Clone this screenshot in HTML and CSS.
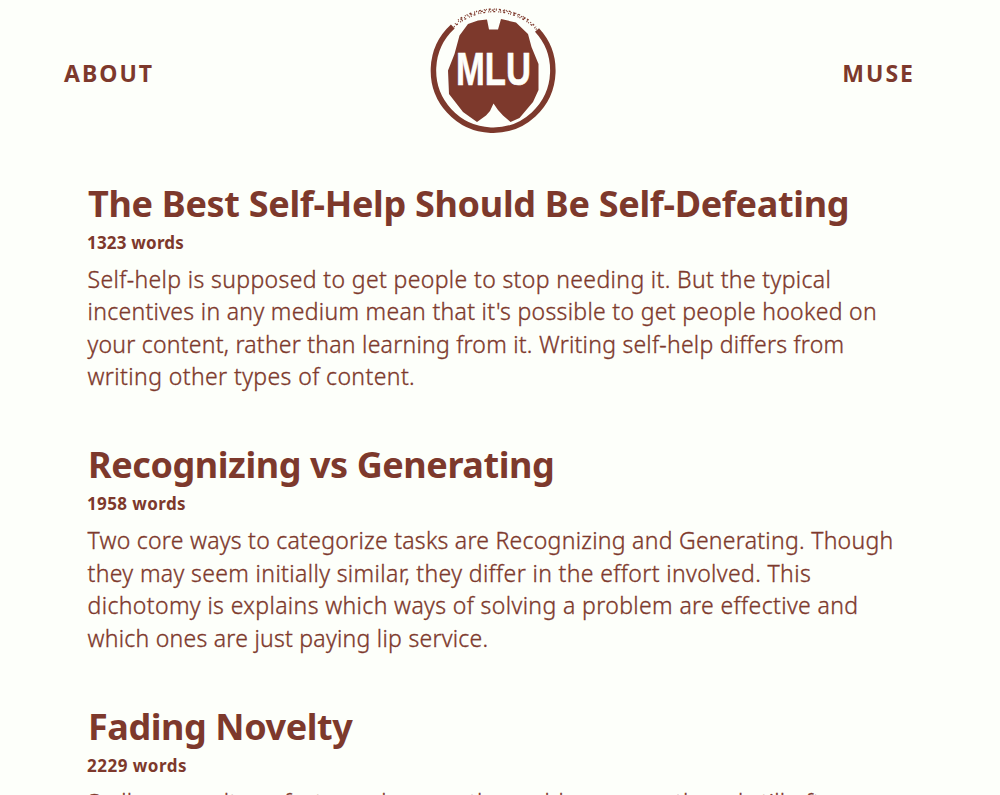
FILE: index.html
```html
<!DOCTYPE html>
<html lang="en">
<head>
<meta charset="utf-8">
<title>MLU</title>
<link rel="stylesheet" href="styles.css">
</head>
<body>
<header class="top">
  <a class="nav">ABOUT</a>
  <svg class="logo" viewBox="0 0 126 126">
    <path class="ring" d="M22.800 19.500A59.700 59.700 0 1 0 107 23"/>
    <path class="dots" d="M24 20A59.700 59.700 0 0 1 107 23"/>
    <path class="dots inner" d="M25 17A61 61 0 0 1 106 20"/>
    <path class="dots" d="M28 13A62.500 62.500 0 0 1 100 14"/>
    <path class="brain" d="M48 13.500L57 12.500L59 22.500H68L71 12L86 15.500L98 27L101.500 40L108.500 57V83L103 95L89.500 111L80.500 115L73 108.500L68 103L63.500 96.500L60 104L56 108.500L47 115L33 105L19 87L18 63.500L24.500 47L29.500 28.500L38 17Z"/>
    <text class="mark" x="26" y="78" textLength="75" lengthAdjust="spacingAndGlyphs">MLU</text>
  </svg>
  <a class="nav right">MUSE</a>
</header>
<main class="posts">
  <article class="post">
    <h2 class="title t1">The Best Self-Help Should Be Self-Defeating</h2>
    <p class="count c1">1323 words</p>
    <p class="text"><span class="l1">Self-help is supposed to get people to stop needing it. But the typical</span><span class="l2">incentives in any medium mean that it's possible to get people hooked on</span><span class="l3">your content, rather than learning from it. Writing self-help differs from</span><span class="l4">writing other types of content.</span></p>
  </article>
  <article class="post">
    <h2 class="title">Recognizing vs Generating</h2>
    <p class="count c2">1958 words</p>
    <p class="text"><span class="l5">Two core ways to categorize tasks are Recognizing and Generating. Though</span><span class="l6">they may seem initially similar, they differ in the effort involved. This</span><span class="l7">dichotomy is explains which ways of solving a problem are effective and</span><span class="l8">which ones are just paying lip service.</span></p>
  </article>
  <article class="post last">
    <h2 class="title">Fading Novelty</h2>
    <p class="count c3">2229 words</p>
    <p class="text"><span class="l9">Sadly, a novelty or fact can do more than add some worth and still often</span></p>
  </article>
</main>
</body>
</html>
```
FILE: styles.css
```css
* { box-sizing: border-box; }
body { margin: 0; height: 795px; overflow: hidden; background: #fdfffa; color: #7d392c; font-family: "Noto Sans", sans-serif; }
.top { display: flex; justify-content: space-between; align-items: center; height: 139px; padding: 0 85px 0 64px; }
.nav { width: 96px; font-size: 23px; font-weight: 700; letter-spacing: 2px; line-height: 30px; padding-top: 6px; white-space: nowrap; }
.right { text-align: right; }
.logo { width: 126px; height: 126px; margin-left: 6px; overflow: visible; }
.ring { fill: none; stroke: #7d392c; stroke-width: 5.500; }
.dots { fill: none; stroke: #7d392c; stroke-width: 1.300; stroke-dasharray: 1 2 2 3 1 1; }
.inner { stroke-dasharray: 1 3 1 2 2 2; }
.brain { fill: #7d392c; }
.mark { fill: #fdfffa; stroke: #fdfffa; stroke-width: .6; font: 700 46px "Liberation Sans", sans-serif; }
.posts { height: 656px; padding: 40.500px 88px 0; overflow: hidden; }
.post { height: 261.500px; }
.title { margin: 0; font-size: 36px; line-height: 47px; font-weight: 700; letter-spacing: -.43px; white-space: nowrap; }
.t1 { letter-spacing: -.31px; }
.count { margin: 4px 0 8px -1px; font-size: 17px; line-height: 24px; font-weight: 700; letter-spacing: .2px; }
.c2 { letter-spacing: .4px; }
.c3 { letter-spacing: .5px; }
.text { margin: 0 0 0 -.500px; font-size: 23px; font-weight: 300; line-height: 32.600px; white-space: nowrap; -webkit-text-stroke: .35px #7d392c; }
.text span { display: block; }
.l1 { letter-spacing: .37px; }
.l2 { letter-spacing: .31px; }
.l3 { letter-spacing: .24px; }
.l4 { letter-spacing: .4px; }
.l5 { letter-spacing: .27px; }
.l6 { letter-spacing: .37px; }
.l7 { letter-spacing: .38px; }
.l8 { letter-spacing: .26px; }
.l9 { letter-spacing: .2px; }
```
